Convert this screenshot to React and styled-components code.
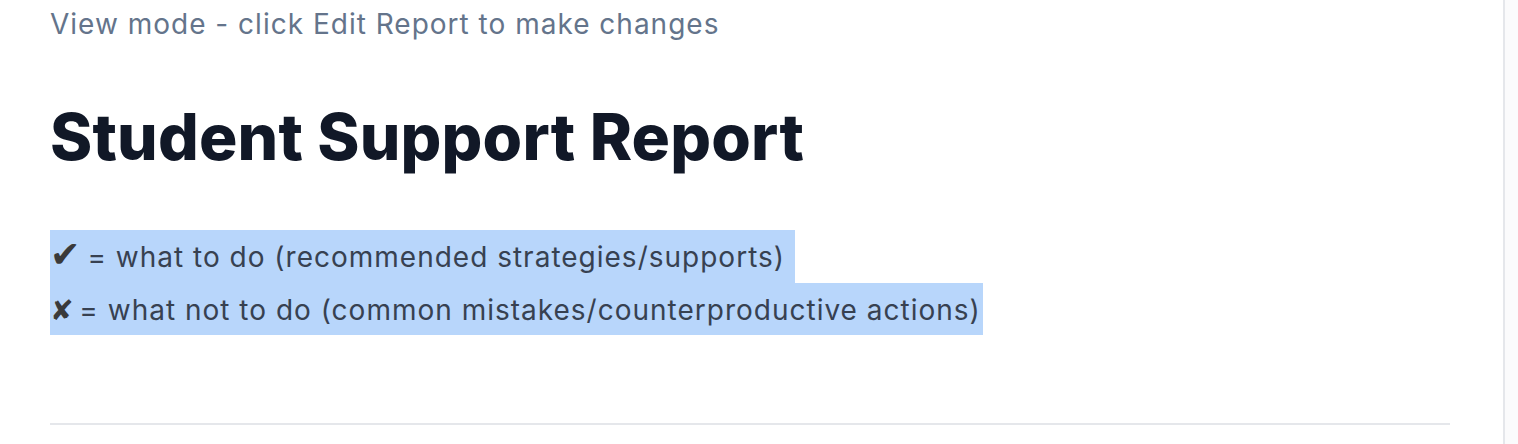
import React from "react";
import styled, { createGlobalStyle } from "styled-components";

const Global = createGlobalStyle`
  html, body { margin: 0; padding: 0; background: #ffffff; }
  body { font-family: Inter, "Noto Sans", sans-serif; overflow: hidden; }
`;

const Layout = styled.div`
  display: flex;
  width: 100%;
  height: 444px;
  overflow: hidden;
`;

const Main = styled.main`
  flex: 0 0 1503px;
  box-sizing: border-box;
  padding: 0 53px 0 50px;
  background: #ffffff;
`;

const Side = styled.aside`
  flex: 1;
  border-left: 2px solid #e5e7eb;
  background: #fbfbfc;
`;

const ModeNote = styled.p`
  margin: 0;
  padding-top: 8px;
  font-size: 28px;
  line-height: 32px;
  letter-spacing: 1px;
  color: #64748b;
`;

const Title = styled.h1`
  margin: 58px 0 0;
  font-size: 64px;
  line-height: 78px;
  font-weight: 800;
  color: #111827;
  letter-spacing: 0.2px;
`;

const Legend = styled.div`
  margin-top: 54px;
  display: flex;
  flex-direction: column;
`;

const LegendLine = styled.div`
  width: fit-content;
  height: 52.5px;
  padding-right: ${(p) => (p.$last ? "2px" : "10px")};
  background: #b8d6fb;
  font-size: 28px;
  line-height: 55px;
  letter-spacing: 1px;
  color: #374151;
  white-space: nowrap;
`;

const Mark = styled.span`
  font-family: "DejaVu Sans", sans-serif;
  font-size: ${(p) => p.$size || "1em"};
  line-height: 0;
  letter-spacing: 0;
  margin-right: ${(p) => p.$gap || "0"};
  color: #3a3a3a;
`;

const Rule = styled.hr`
  margin: 88px 0 0;
  border: 0;
  height: 2px;
  background: #e5e7eb;
`;

export default function App() {
  return (
    <>
      <Global />
      <Layout>
        <Main>
          <ModeNote>View mode - click Edit Report to make changes</ModeNote>
          <Title>Student Support Report</Title>
          <Legend>
            <LegendLine><Mark $size="1.3em" $gap="-2px">✔</Mark> = what to do (recommended strategies/supports)</LegendLine>
            <LegendLine $last><Mark $gap="-3px">✘</Mark> = what not to do (common mistakes/counterproductive actions)</LegendLine>
          </Legend>
          <Rule />
        </Main>
        <Side />
      </Layout>
    </>
  );
}
